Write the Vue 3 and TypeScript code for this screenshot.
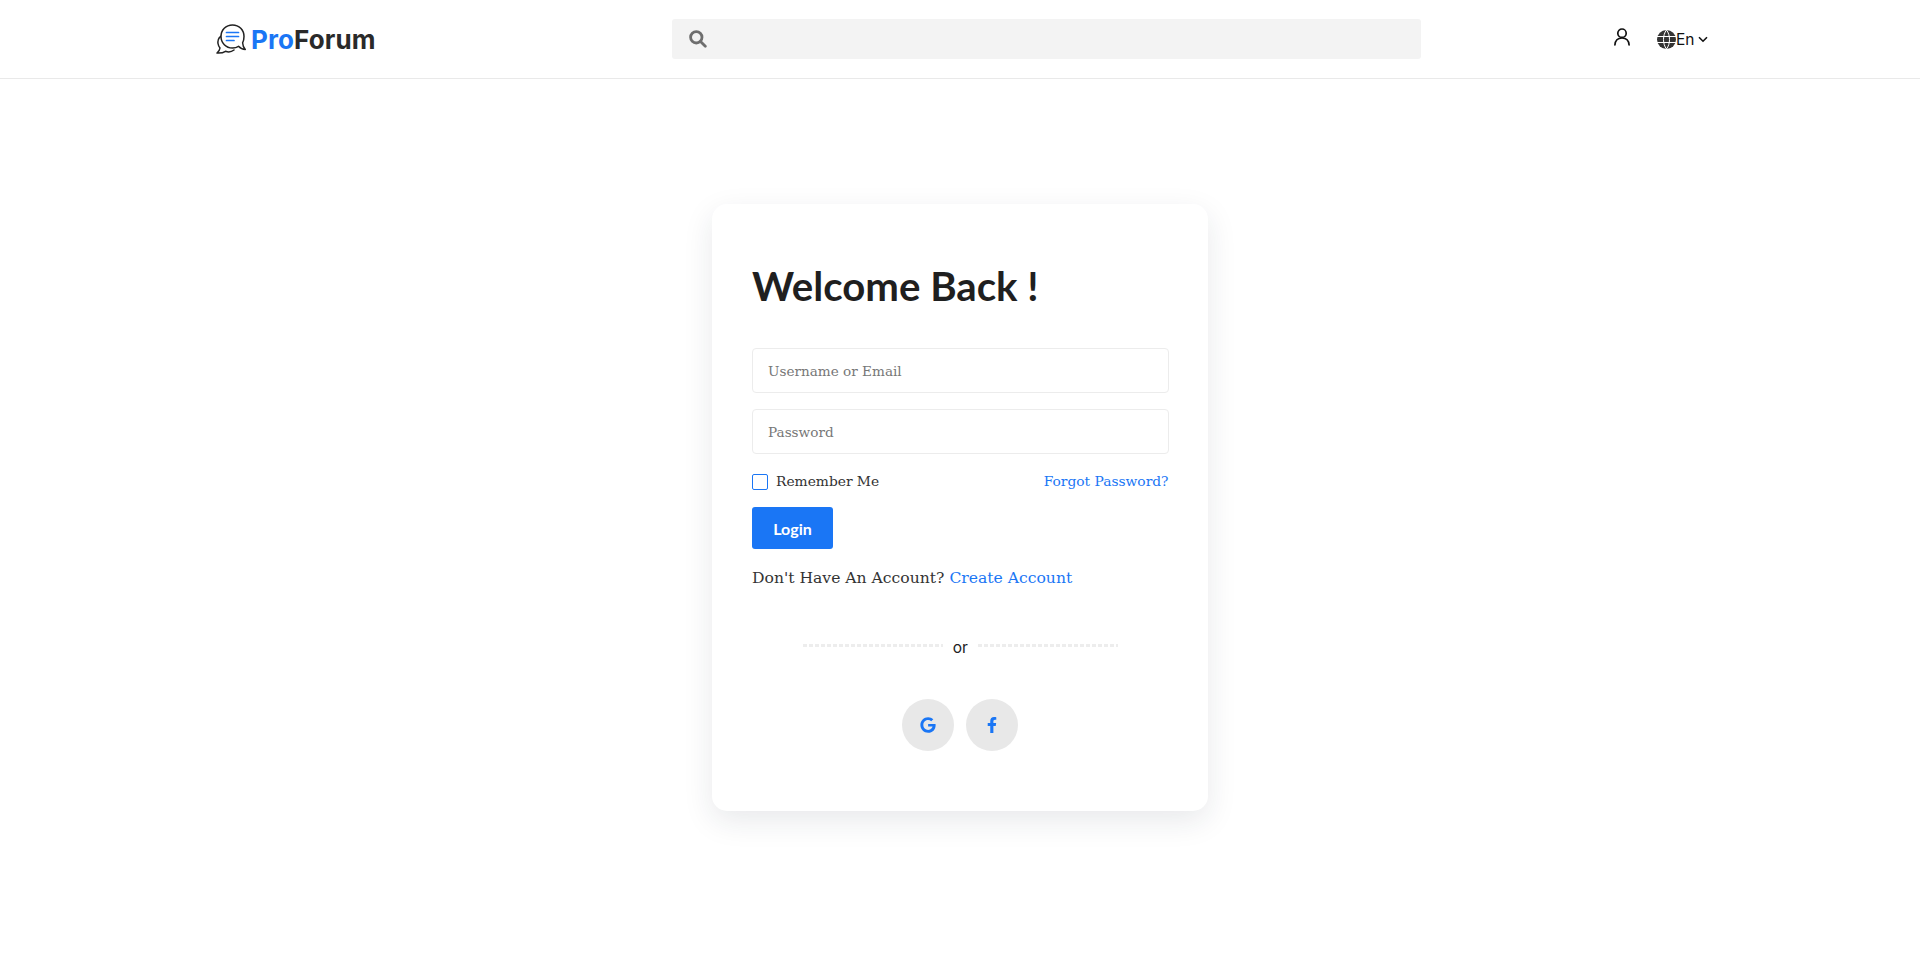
<template>
  <div class="page">
    <header class="topbar">
      <div class="topbar-inner">
        <a class="logo" href="#">
          <svg class="logo-mark" width="30" height="30" viewBox="0 0 30 30" fill="none">
            <path d="M7.500 11 C3.500 12.500 1.500 16 2 19.500 C2.300 21.500 3 22.800 4 24 C3.800 25.800 2.500 27.800 1 29 C4.500 29.200 7.500 28.600 9.500 27.300 C12.500 28.500 15.500 28 18 26" stroke="#222" stroke-width="1.500" stroke-linejoin="round" stroke-linecap="round" />
            <path d="M16.500 1 C9.800 1 5 6 5 12.500 C5 19 10 24 16.500 24 C18.900 24 21 23.300 22.500 22.300 C24.300 24.300 26.500 25.400 29.300 25.400 C27.500 23.500 26.700 21.400 26.600 18.800 C27.600 17 28 15 28 12.500 C28 6 23.200 1 16.500 1 Z" fill="#fff" stroke="#222" stroke-width="1.500" stroke-linejoin="round" />
            <path d="M10.500 8.500 H22.500 M10.500 12.500 H22.500 M10.500 16.500 H18" stroke="#1a76f5" stroke-width="1.700" stroke-linecap="round" />
          </svg>
          <span class="logo-text"><span class="logo-pro">Pro</span>Forum</span>
        </a>
        <div class="search">
          <svg width="18" height="18" viewBox="0 0 18 18" fill="none" stroke="#6e6e6e" stroke-width="2.800">
            <circle cx="7.300" cy="7.300" r="5.700" />
            <path d="M11.500 11.500 L16.300 16.300" stroke-linecap="round" />
          </svg>
        </div>
        <div class="actions">
          <svg class="user" width="16" height="18" viewBox="0 0 16 18" fill="none" stroke="#111" stroke-width="1.700" stroke-linecap="round">
            <circle cx="8" cy="5.200" r="4.200" />
            <path d="M0.900 17 C1.200 12.600 4 10 8 10 C12 10 14.800 12.600 15.100 17" />
          </svg>
          <div class="lang">
            <svg width="19" height="19" viewBox="0 0 19 19">
              <circle cx="9.500" cy="9.500" r="9.500" fill="#333" />
              <path d="M0 6.500 H19 M0 12.500 H19 M9.500 0 C5.500 5 5.500 14 9.500 19 M9.500 0 C13.500 5 13.500 14 9.500 19" stroke="#fff" stroke-width="1" fill="none" />
            </svg>
            <span>En</span>
            <svg class="chev" width="10" height="7" viewBox="0 0 10 7" fill="none" stroke="#111" stroke-width="1.600">
              <path d="M1 1.200 L5 5.200 L9 1.200" />
            </svg>
          </div>
        </div>
      </div>
    </header>

    <main class="main">
      <form class="card" @submit.prevent>
        <h1>Welcome Back !</h1>
        <input class="field" type="text" placeholder="Username or Email" />
        <input class="field second" type="password" placeholder="Password" />
        <div class="row">
          <label class="remember"><span class="box"></span>Remember Me</label>
          <a class="link" href="#">Forgot Password?</a>
        </div>
        <button class="login" type="submit">Login</button>
        <p class="signup">Don't Have An Account? <a class="link" href="#">Create Account</a></p>
        <div class="divider"><span class="dash"></span><span class="or">or</span><span class="dash"></span></div>
        <div class="social">
          <a class="circle" href="#">
            <svg width="16" height="16" viewBox="0 0 488 512" fill="#1a76f5">
              <path d="M488 261.800C488 403.300 391.100 504 248 504 110.800 504 0 393.200 0 256S110.800 8 248 8c66.800 0 123 24.500 166.300 64.900l-67.500 64.900C258.500 52.600 94.300 116.600 94.300 256c0 86.500 69.100 156.600 153.700 156.600 98.200 0 135-70.400 140.800-106.900H248v-85.300h236.100c2.300 12.700 3.900 24.900 3.900 41.400z" />
            </svg>
          </a>
          <a class="circle" href="#">
            <svg width="10" height="16" viewBox="0 0 320 512" fill="#1a76f5">
              <path d="M279.140 288l14.220-92.660h-88.910v-60.130c0-25.350 12.420-50.060 52.240-50.060h40.420V6.260S260.430 0 225.360 0c-73.220 0-121.080 44.380-121.080 124.720v70.620H22.890V288h81.390v224h100.170V288z" />
            </svg>
          </a>
        </div>
      </form>
    </main>
  </div>
</template>

<script setup lang="ts">
</script>

<style>
html, body {
  background: #fff;
}
</style>

<style scoped>
.page {
  min-height: 955px;
  background: #fff;
  font-family: "Liberation Serif", serif;
  color: #222;
}

.topbar {
  height: 78px;
  border-bottom: 1px solid #e9e9e9;
}

.topbar-inner {
  width: 1500px;
  height: 100%;
  margin: 0 auto;
  padding-left: 6px;
  box-sizing: border-box;
  display: flex;
  align-items: center;
}

.logo {
  display: flex;
  align-items: center;
  gap: 5px;
  flex: 0 0 456px;
  text-decoration: none;
}

.logo-text {
  font-family: Inter, sans-serif;
  font-weight: 700;
  font-size: 26px;
  letter-spacing: 0.100px;
  color: #2a2a2a;
}

.logo-pro {
  color: #1a76f5;
}

.search {
  flex: 0 0 749px;
  height: 40px;
  background: #f3f3f3;
  border-radius: 3px;
  display: flex;
  align-items: center;
  padding-left: 17px;
  box-sizing: border-box;
}

.actions {
  display: flex;
  align-items: center;
  flex: none;
  margin-left: 193px;
  gap: 27px;
}

.user {
  margin-bottom: 5px;
}

.lang {
  display: flex;
  align-items: center;
  font-family: Inter, sans-serif;
  font-size: 15.500px;
  color: #111;
}

.lang .chev {
  margin-left: 4px;
}

.main {
  display: flex;
  justify-content: center;
  padding-top: 125px;
}

.card {
  width: 496px;
  height: 607px;
  box-sizing: border-box;
  padding: 40px 39.500px 40px 40px;
  background: #fff;
  border-radius: 15px;
  box-shadow: 0 10px 30px rgba(30, 40, 60, 0.1);
  display: flex;
  flex-direction: column;
}

h1 {
  margin: 19px 0 0;
  font-family: Lato, sans-serif;
  font-weight: 700;
  font-size: 40.200px;
  line-height: 46px;
  color: #1f1f1f;
}

.field {
  height: 45px;
  margin-top: 39px;
  padding: 1px 15px 0;
  box-sizing: border-box;
  border: 1px solid #ececec;
  border-radius: 4px;
  font-family: "DejaVu Serif", serif;
  font-size: 13.600px;
  outline: none;
}

.field::placeholder {
  color: #777;
}

.field.second {
  margin-top: 16px;
}

.row {
  display: flex;
  justify-content: space-between;
  align-items: center;
  margin-top: 14px;
  height: 25px;
  font-family: "DejaVu Serif", serif;
  font-size: 13.800px;
  line-height: 24px;
}

.remember {
  display: flex;
  align-items: center;
  gap: 8px;
  color: #333;
}

.box {
  width: 16px;
  height: 16px;
  margin-top: 3px;
  box-sizing: border-box;
  border: 1px solid #1a76f5;
  border-radius: 2px;
}

.link {
  color: #1a76f5;
  text-decoration: none;
}

.login {
  width: 81px;
  height: 42px;
  margin-top: 14px;
  border: 0;
  border-radius: 3px;
  background: #1a76f5;
  color: #fff;
  font-family: Lato, sans-serif;
  font-weight: 700;
  font-size: 16px;
}

.signup {
  margin: 17px 0 0;
  font-family: "DejaVu Serif", serif;
  font-size: 15.600px;
  line-height: 24px;
  color: #333;
}

.divider {
  display: flex;
  align-items: center;
  justify-content: center;
  gap: 10px;
  margin-top: 45px;
  height: 24px;
}

.dash {
  width: 140px;
  height: 3px;
  margin-top: -3px;
  background: repeating-linear-gradient(90deg, #ededed 0 4px, transparent 4px 6px);
}

.or {
  font-family: Inter, sans-serif;
  font-size: 15.500px;
  color: #222;
}

.social {
  display: flex;
  justify-content: center;
  gap: 12px;
  margin-top: 40px;
}

.circle {
  width: 52px;
  height: 52px;
  border-radius: 50%;
  background: #e8e8e8;
  display: flex;
  align-items: center;
  justify-content: center;
}
</style>
